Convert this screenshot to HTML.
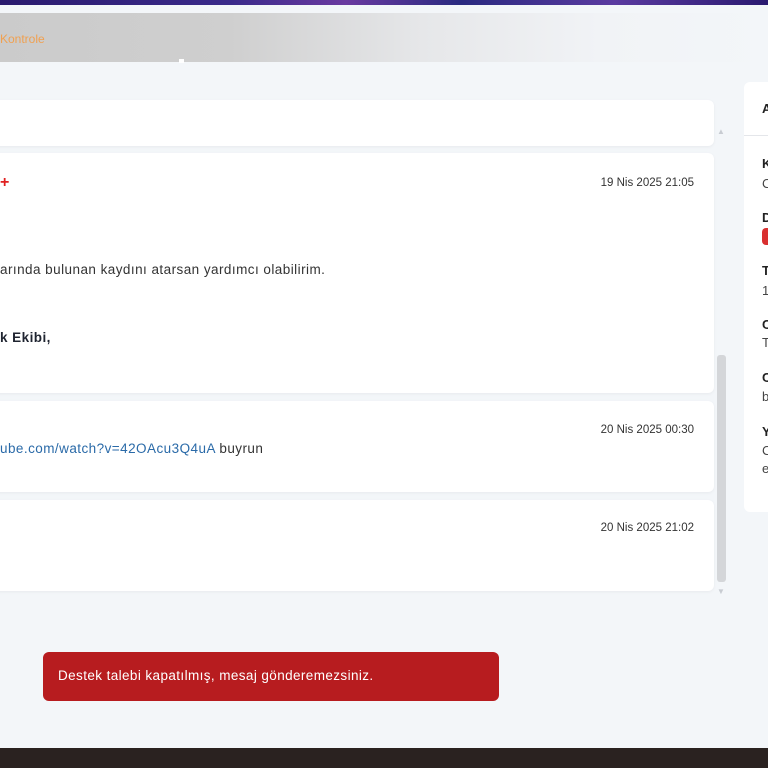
<!DOCTYPE html>
<html><head><meta charset="utf-8"><style>
*{margin:0;padding:0;box-sizing:border-box}
body{width:768px;height:768px;overflow:hidden;background:#f3f6f9;font-family:"Liberation Sans",sans-serif;position:relative;color:#222}
.abs{position:absolute}
.top{left:0;top:0;width:768px;height:5px;background:linear-gradient(90deg,#2a1a6e,#3a2a8a 30%,#6a3aa0 45%,#2a2a80 60%,#5a3aa0 80%,#2a1a70)}
.hdr{left:0;top:13px;width:768px;height:49px;background:linear-gradient(90deg,#cbcbcb 0%,#cfcfcf 30%,#e6e7e9 55%,#f1f3f6 78%,#f3f6f9 100%)}
.card{background:#fff;border-radius:6px;left:-10px;width:724px;box-shadow:0 1px 3px rgba(0,0,0,.05)}
.date{font-size:11.5px;color:#333;right:20px}
.t{font-size:13.5px;color:#333;letter-spacing:.45px}
.lab{font-size:13px;font-weight:bold;color:#222;left:762px}
.val{font-size:13px;color:#444;left:762px}
</style></head><body>
<div class="abs top"></div>
<div class="abs hdr"></div>
<div class="abs" style="left:0;top:32px;font-size:12px;color:#f0a050">Kontrole</div>
<div class="abs" style="left:179px;top:59px;width:5px;height:4px;background:#fff"></div>

<div class="abs card" style="top:100px;height:46px"></div>
<div class="abs card" style="top:153px;height:240px">
 <div class="abs date" style="top:24px">19 Nis 2025 21:05</div>
</div>
<div class="abs" style="left:0;top:174px;color:#e02020;font-size:16px;font-weight:bold">+</div>
<div class="abs t" style="left:0;top:262px">arında bulunan kaydını atarsan yardımcı olabilirim.</div>
<div class="abs t" style="left:0;top:330px;font-weight:bold;color:#1f2430">k Ekibi,</div>
<div class="abs card" style="top:401px;height:91px">
 <div class="abs date" style="top:23px">20 Nis 2025 00:30</div>
</div>
<div class="abs t" style="left:0;top:441px"><span style="color:#2a6aa8">ube.com/watch?v=42OAcu3Q4uA</span> buyrun</div>
<div class="abs card" style="top:500px;height:91px">
 <div class="abs date" style="top:22px">20 Nis 2025 21:02</div>
</div>

<div class="abs" style="left:717px;top:127px;color:#c8ccd2;font-size:8px">▲</div>
<div class="abs" style="left:717px;top:587px;color:#c8ccd2;font-size:8px">▼</div>
<div class="abs" style="left:717px;top:355px;width:9px;height:227px;background:#d4d6d9;border-radius:3px"></div>

<div class="abs" style="left:744px;top:82px;width:40px;height:430px;background:#fff;border-radius:6px"></div>
<div class="abs" style="left:744px;top:135px;width:30px;height:1px;background:#e4e6ea"></div>
<div class="abs lab" style="top:101px">A</div>
<div class="abs lab" style="top:156px">K</div><div class="abs val" style="top:176px">C</div>
<div class="abs lab" style="top:210px">D</div>
<div class="abs" style="left:762px;top:228px;width:12px;height:17px;background:#d93030;border-radius:4px"></div>
<div class="abs lab" style="top:263px">T</div><div class="abs val" style="top:283px">1</div>
<div class="abs lab" style="top:317px">C</div><div class="abs val" style="top:335px">T</div>
<div class="abs lab" style="top:370px">C</div><div class="abs val" style="top:389px">b</div>
<div class="abs lab" style="top:424px">Y</div><div class="abs val" style="top:443px">C</div><div class="abs val" style="top:461px">e</div>

<div class="abs" style="left:43px;top:652px;width:456px;height:49px;background:#b71c1f;border-radius:6px;color:#fff;font-size:13.5px;letter-spacing:.4px;padding:16px 0 0 15px">Destek talebi kapatılmış, mesaj gönderemezsiniz.</div>
<div class="abs" style="left:0;top:748px;width:768px;height:20px;background:#2a2220"></div>
</body></html>
